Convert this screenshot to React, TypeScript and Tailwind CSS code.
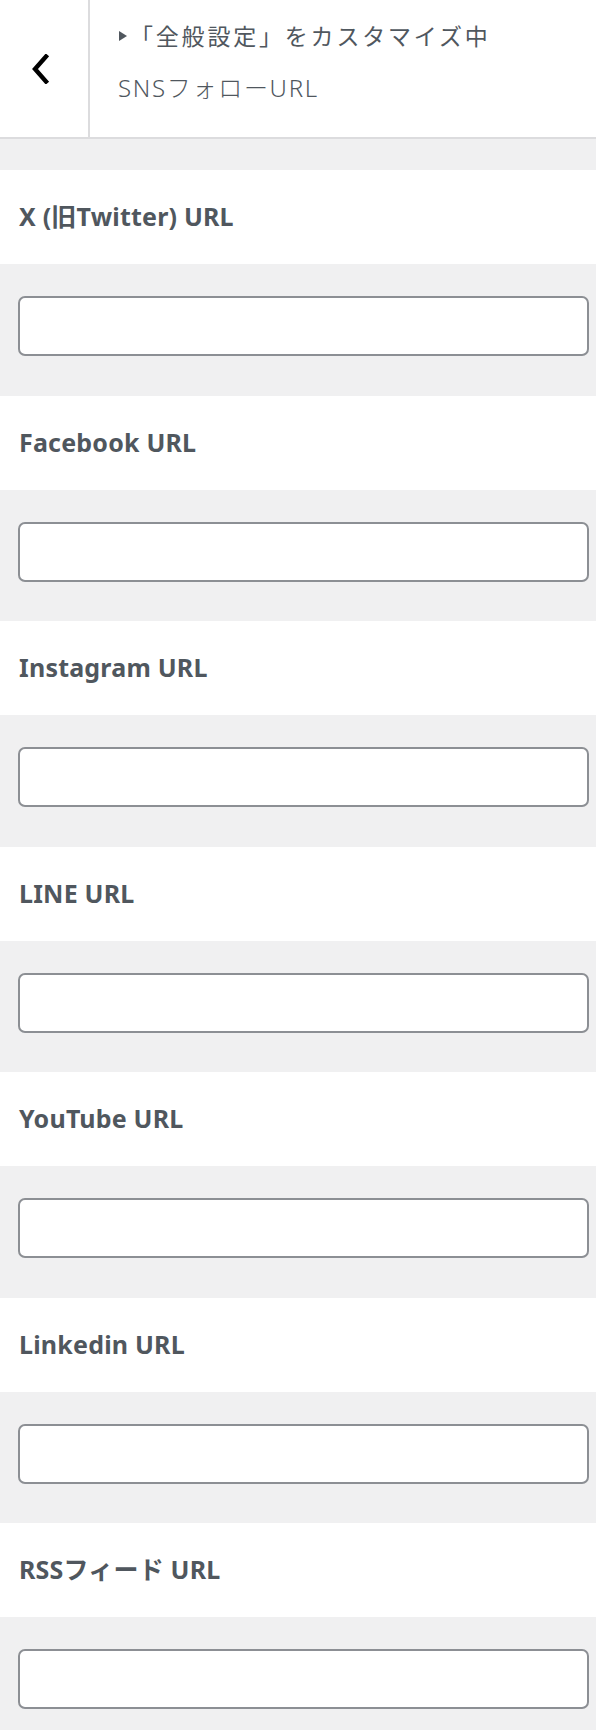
const fields = [
  'X (旧Twitter) URL',
  'Facebook URL',
  'Instagram URL',
  'LINE URL',
  'YouTube URL',
  'Linkedin URL',
  'RSSフィード URL',
]

function BackChevron() {
  return (
    <svg width="20" height="30" viewBox="0 0 20 30" fill="none">
      <path d="M16 2.5 L5 15 L16 27.5" stroke="#000" strokeWidth="4.4" strokeLinecap="square" />
    </svg>
  )
}

export default function App() {
  return (
    <div
      className="w-[596px] min-h-[1730px] bg-[#f0f0f1] text-[#50575e]"
      style={{ fontFamily: '"Noto Sans", "Noto Sans CJK JP", sans-serif' }}
    >
      <div className="flex h-[139px] bg-white border-b-2 border-[#dcdcde]">
        <button className="w-[90px] shrink-0 flex items-center justify-center border-r-2 border-[#dcdcde] pr-[8px]">
          <BackChevron />
        </button>
        <div className="flex-1 pl-[28px] pt-[19px]">
          <div className="flex items-center h-[34px] text-[23px] tracking-[2.8px]">
            <svg width="9" height="10" viewBox="0 0 9 10" className="mr-[2px] ml-[1px]">
              <path d="M0 0 L8 5 L0 10 Z" fill="#50575e" />
            </svg>
            <span>「全般設定」をカスタマイズ中</span>
          </div>
          <div className="mt-[18px] text-[24px] font-light tracking-[1.7px] leading-[34px]">SNSフォローURL</div>
        </div>
      </div>

      <div className="pt-[31px]">
        {fields.map((label, i) => (
          <div key={label}>
            <div className="h-[94px] bg-white flex items-center px-[19px]">
              <span className="text-[25px] font-bold tracking-[0.2px] text-[#50575e]">{label}</span>
            </div>
            <div className={i % 2 === 0 ? 'pt-[32px] pb-[40px]' : 'pt-[32px] pb-[39px]'}>
              <input
                type="text"
                className="block ml-[18px] w-[571px] h-[60px] bg-white border-2 border-[#8c8f94] rounded-[7px] px-3 outline-none"
              />
            </div>
          </div>
        ))}
      </div>
    </div>
  )
}
